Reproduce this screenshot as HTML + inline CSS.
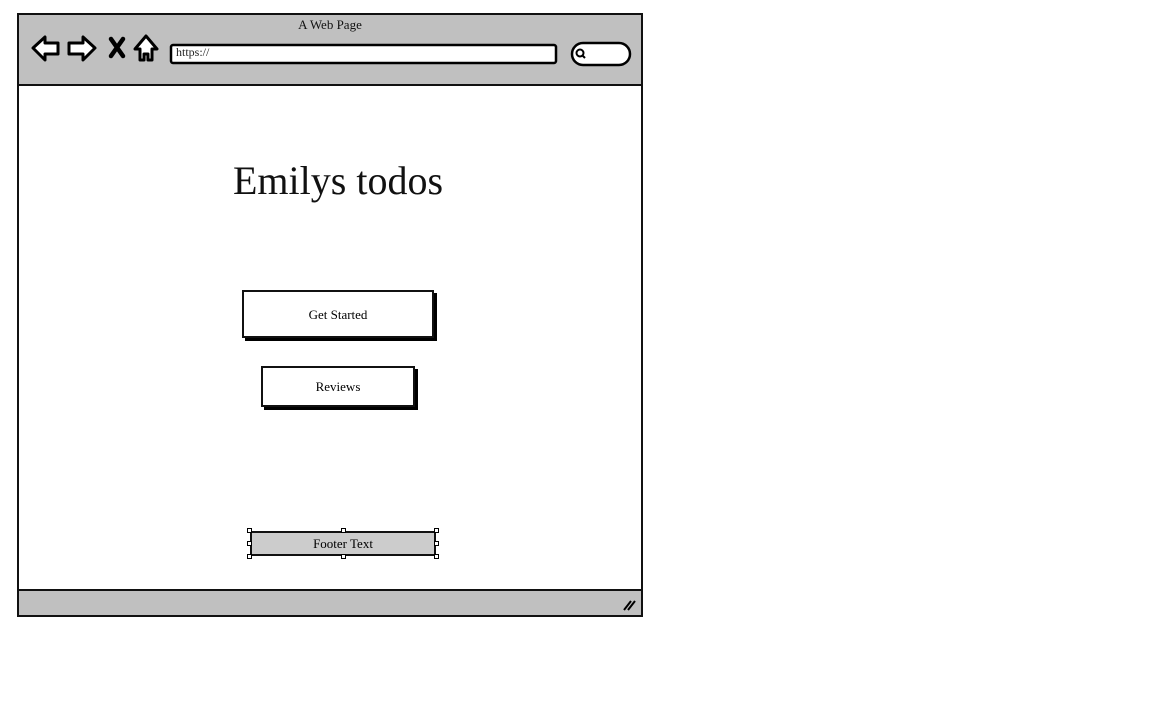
<!DOCTYPE html>
<html><head><style>
html,body{margin:0;padding:0;width:1152px;height:720px;background:#fff;overflow:hidden;font-family:"Liberation Serif",serif;}
.a{position:absolute;box-sizing:border-box;}
</style></head><body>
<div class="a" style="left:17px;top:13px;width:626px;height:604px;border:2px solid #111;background:#fff;"></div>
<div class="a" style="left:19px;top:15px;width:622px;height:71px;background:#c0c0c0;border-bottom:2px solid #111;"></div>
<div class="a" style="left:19px;top:589px;width:622px;height:26px;background:#c0c0c0;border-top:2px solid #111;"></div>
<div class="a" style="left:0;top:17px;width:660px;text-align:center;font-size:13px;color:#111;">A Web Page</div>
<svg class="a" style="left:0;top:0" width="660" height="720">
<g fill="#fff" stroke="#000" stroke-width="3" stroke-linejoin="round">
<path d="M33 48 L45 37 L45 43 L58 43 L58 54 L45 54 L45 60 Z"/>
<path d="M95 48 L83 37 L83 43 L69 43 L69 54 L83 54 L83 60 Z"/>
<path d="M146 36 L157 49 L152 49 L152 60 L148 60 L148 54 L144 54 L144 60 L140 60 L140 49 L135 49 Z"/>
</g>
<path d="M111 39 L123 56 M123 39 L111 56" stroke="#000" stroke-width="4.5" stroke-linecap="round"/>
<rect x="171" y="45" width="385" height="18" rx="2" fill="#fff" stroke="#000" stroke-width="2.5"/>
<rect x="572" y="43" width="58" height="22" rx="11" fill="#fff" stroke="#000" stroke-width="2.5"/>
<circle cx="580" cy="53" r="3.5" fill="none" stroke="#000" stroke-width="2"/>
<path d="M582 55 L585 58" stroke="#000" stroke-width="2"/>
<path d="M624 610 L631 601 M628 610 L635 601" stroke="#000" stroke-width="2"/>
</svg>
<div class="a" style="left:176px;top:45px;font-size:12px;color:#222;">https://</div>
<div class="a" style="left:0;top:157px;width:676px;text-align:center;font-size:40px;color:#111;">Emilys todos</div>
<div class="a" style="left:242px;top:290px;width:192px;height:48px;border:2px solid #111;box-shadow:3px 3px 0 #000;background:#fff;text-align:center;line-height:46px;font-size:13px;">Get Started</div>
<div class="a" style="left:261px;top:366px;width:154px;height:41px;border:2px solid #111;box-shadow:3px 3px 0 #000;background:#fff;text-align:center;line-height:37px;font-size:13px;">Reviews</div>
<div class="a" style="left:250px;top:531px;width:186px;height:25px;border:2px solid #111;background:#cccccc;text-align:center;line-height:21px;font-size:13px;">Footer Text</div>
<div class="a" style="left:247px;top:528px;width:5px;height:5px;border:1px solid #000;background:#fff"></div>
<div class="a" style="left:341px;top:528px;width:5px;height:5px;border:1px solid #000;background:#fff"></div>
<div class="a" style="left:434px;top:528px;width:5px;height:5px;border:1px solid #000;background:#fff"></div>
<div class="a" style="left:247px;top:541px;width:5px;height:5px;border:1px solid #000;background:#fff"></div>
<div class="a" style="left:434px;top:541px;width:5px;height:5px;border:1px solid #000;background:#fff"></div>
<div class="a" style="left:247px;top:554px;width:5px;height:5px;border:1px solid #000;background:#fff"></div>
<div class="a" style="left:341px;top:554px;width:5px;height:5px;border:1px solid #000;background:#fff"></div>
<div class="a" style="left:434px;top:554px;width:5px;height:5px;border:1px solid #000;background:#fff"></div>
</body></html>
